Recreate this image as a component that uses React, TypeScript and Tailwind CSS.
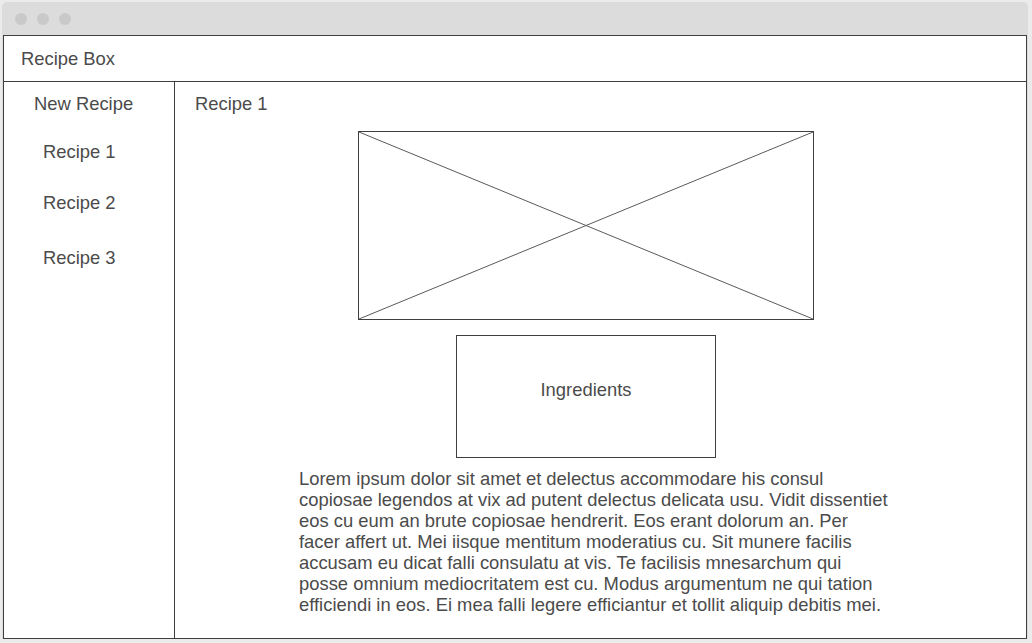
import React from "react";

const font = { fontFamily: '"Liberation Sans", Arial, sans-serif' };

export default function App() {
  return (
    <div
      className="w-[1032px] h-[643px] bg-[#ebebeb] pt-[2px] pl-[2px] overflow-hidden text-[18.4px] leading-[21px] text-[#4b4b4b]"
      style={font}
    >
      <div className="w-[1026px] h-[637px] bg-[#dcdcdc] rounded-t-[5px] px-[1px] flex flex-col">
        <div className="h-[33px] flex items-center pl-[12px] gap-[10px] shrink-0">
          <div className="w-[12px] h-[12px] rounded-full bg-[#c9c9c9]" />
          <div className="w-[12px] h-[12px] rounded-full bg-[#c9c9c9]" />
          <div className="w-[12px] h-[12px] rounded-full bg-[#c9c9c9]" />
        </div>
        <div className="w-[1024px] h-[604px] bg-white border border-[#3f3f3f] flex flex-col">
          <div className="h-[46px] border-b border-[#3f3f3f] flex items-center pl-[17px] shrink-0">
            Recipe Box
          </div>
          <div className="flex flex-1 min-h-0">
            <div className="w-[171px] border-r border-[#3f3f3f] flex flex-col pt-[11px] shrink-0">
              <div className="pl-[30px]">New Recipe</div>
              <div className="pl-[39px] mt-[27px]">Recipe 1</div>
              <div className="pl-[39px] mt-[30px]">Recipe 2</div>
              <div className="pl-[39px] mt-[34px]">Recipe 3</div>
            </div>
            <div className="flex-1 flex flex-col pt-[11px]">
              <div className="pl-[20px]">Recipe 1</div>
              <div className="relative ml-[183px] mt-[17px] w-[456px] h-[189px] border border-[#3f3f3f]">
                <svg
                  className="absolute inset-0 w-full h-full"
                  viewBox="0 0 454 187"
                  preserveAspectRatio="none"
                >
                  <line x1="0" y1="0" x2="454" y2="187" stroke="#5a5a5a" strokeWidth="1" />
                  <line x1="454" y1="0" x2="0" y2="187" stroke="#5a5a5a" strokeWidth="1" />
                </svg>
              </div>
              <div className="ml-[281px] mt-[15px] w-[260px] h-[123px] border border-[#3f3f3f] flex justify-center pt-[43px]">
                Ingredients
              </div>
              <p className="ml-[124px] mt-[10px] w-[592px]">
                Lorem ipsum dolor sit amet et delectus accommodare his consul copiosae legendos at vix ad putent
                delectus delicata usu. Vidit dissentiet eos cu eum an brute copiosae hendrerit. Eos erant dolorum
                an. Per facer affert ut. Mei iisque mentitum moderatius cu. Sit munere facilis accusam eu dicat
                falli consulatu at vis. Te facilisis mnesarchum qui posse omnium mediocritatem est cu. Modus
                argumentum ne qui tation efficiendi in eos. Ei mea falli legere efficiantur et tollit aliquip
                debitis mei.
              </p>
            </div>
          </div>
        </div>
      </div>
    </div>
  );
}
